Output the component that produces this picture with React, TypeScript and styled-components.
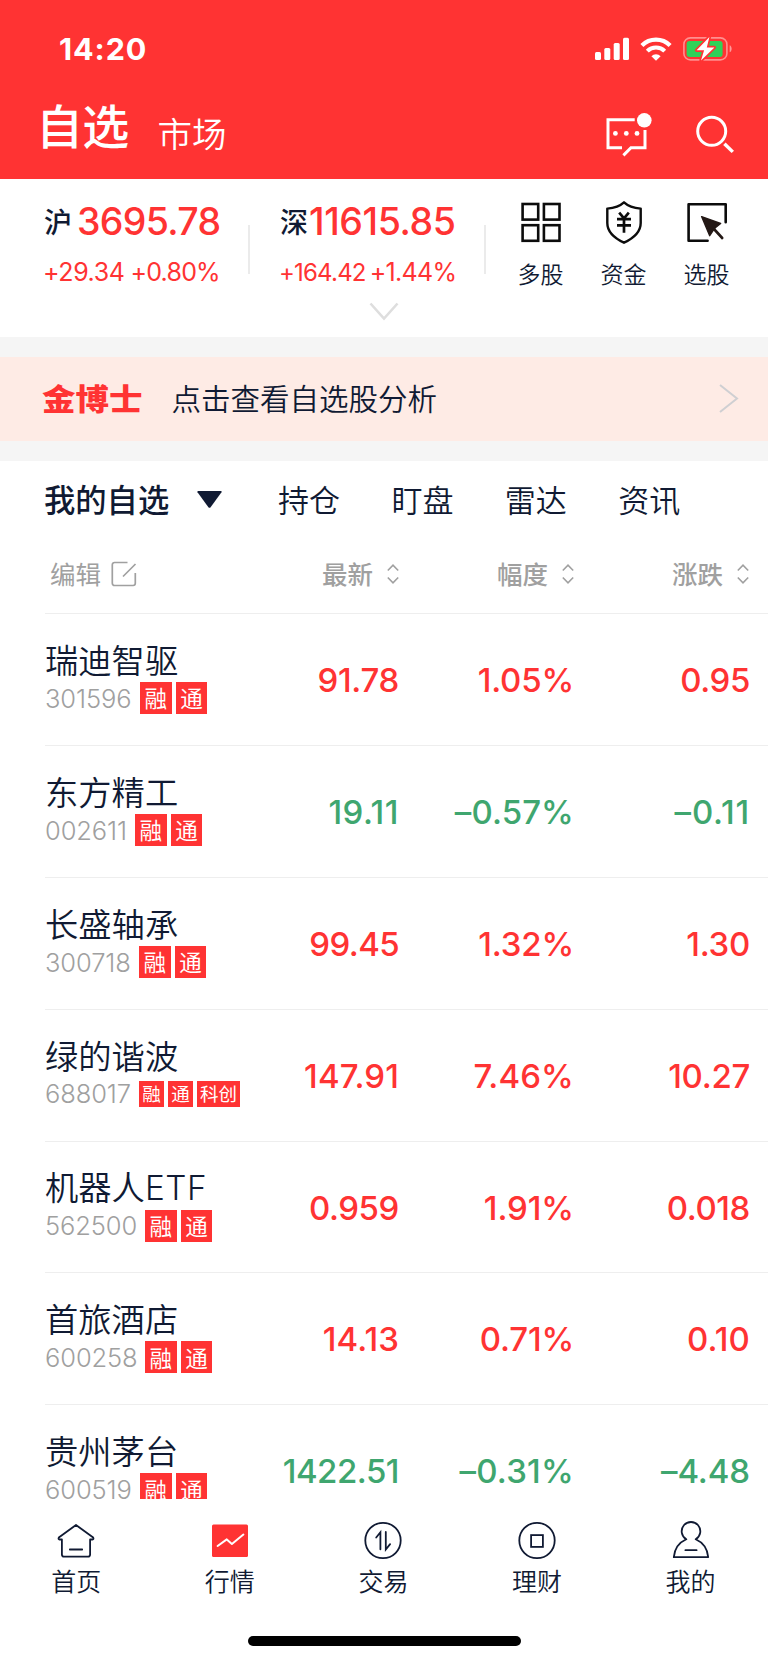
import React from "react";
import styled, { createGlobalStyle } from "styled-components";

const RED = "#ff3333";
const GREEN = "#3fa66f";
const INK = "#101a33";
const GREY = "#a0a0a0";
const CJK = '"Noto Sans CJK SC", "Noto Sans", sans-serif';
const NUM = 'Inter, "Noto Sans CJK SC", sans-serif';

const GlobalStyle = createGlobalStyle`
  * { box-sizing: border-box; }
  html, body { margin: 0; padding: 0; background: #fff; }
  body { font-family: ${CJK}; color: ${INK}; }
  svg { display: block; flex: none; overflow: visible; }
`;

const Screen = styled.div`
  width: 768px;
  height: 1663px;
  display: flex;
  flex-direction: column;
  overflow: hidden;
  background: #fff;
`;

type TextProps = { $size: number; $weight?: number; $color?: string; $spacing?: number };

const BaseText = styled.span<TextProps>`
  font-size: ${(p) => p.$size}px;
  line-height: 1;
  font-weight: ${(p) => p.$weight ?? 400};
  color: ${(p) => p.$color ?? "inherit"};
  letter-spacing: ${(p) => p.$spacing ?? 0}px;
  white-space: nowrap;
`;

const Han = styled(BaseText)`
  font-family: ${CJK};
  margin-bottom: 3px;
`;

const Num = styled(BaseText)`
  font-family: ${NUM};
`;

const Latin = styled.span`
  font-family: ${NUM};
  line-height: 0;
  letter-spacing: 0.6px;
`;

/* Header */
const Header = styled.header`
  height: 179px;
  flex: none;
  background: ${RED};
  color: #fff;
`;

const StatusBar = styled.div`
  height: 98px;
  padding: 0 36px 0 59px;
  display: flex;
  align-items: center;
  justify-content: space-between;
`;

const StatusIcons = styled.div`
  display: flex;
  align-items: center;
  gap: 11px;
`;

const TitleBar = styled.div`
  height: 81px;
  display: flex;
  align-items: flex-start;
  padding: 2px 33px 0 36px;
`;

const SubTitle = styled.div`
  margin: 15px auto 0 29px;
  display: flex;
`;

const HeaderIcons = styled.div`
  display: flex;
  gap: 36px;
  padding-top: 10px;
`;

/* Indices */
const Indices = styled.section`
  height: 158px;
  flex: none;
  display: flex;
  flex-direction: column;
  align-items: center;
`;

const IndexRow = styled.div`
  width: 100%;
  height: 120px;
  display: flex;
  padding: 22px 0 0 43px;
`;

const IndexCard = styled.div<{ $width: number; $ruleGap: number }>`
  width: ${(p) => p.$width}px;
  display: flex;
  justify-content: space-between;
  margin-right: ${(p) => p.$ruleGap}px;
`;

const IndexBody = styled.div`
  display: flex;
  flex-direction: column;
  gap: 13px;
`;

const IndexLine = styled.div<{ $height: number; $gap: number; $indent?: number }>`
  height: ${(p) => p.$height}px;
  padding-left: ${(p) => p.$indent ?? 0}px;
  display: flex;
  align-items: center;
  gap: ${(p) => p.$gap}px;
`;

const Rule = styled.i`
  width: 1.5px;
  height: 49px;
  margin-top: 24px;
  background: #ebebeb;
`;

const Shortcuts = styled.nav`
  display: flex;
  gap: 37px;
`;

const Shortcut = styled.div`
  width: 46px;
  display: flex;
  flex-direction: column;
  align-items: center;
  gap: 18px;
`;

const Gap = styled.div<{ $height: number }>`
  height: ${(p) => p.$height}px;
  flex: none;
  background: #f5f5f5;
`;

const Banner = styled.section`
  height: 84px;
  flex: none;
  display: flex;
  align-items: center;
  padding: 0 29px 0 42px;
  background: #feebe5;
`;

const BrandMark = styled(Han)`
  transform: scaleY(0.88);
`;

const BannerText = styled.div`
  margin: 0 auto 0 29px;
  display: flex;
`;

/* Watchlist */
const Tabs = styled.nav`
  height: 79px;
  flex: none;
  display: flex;
  align-items: center;
  padding-left: 44px;
  padding-bottom: 1px;
`;

const ActiveTab = styled.div`
  width: 234px;
  display: flex;
  align-items: center;
  gap: 28px;
`;

const Tab = styled.div`
  width: 113.4px;
  display: flex;
`;

const HeadRow = styled.div`
  height: 73px;
  flex: none;
  margin-left: 45px;
  padding: 0 19px 5px 5px;
  display: grid;
  grid-template-columns: 349px 175px 175px;
  align-items: center;
`;

const EditCell = styled.div`
  display: flex;
  align-items: center;
  gap: 9.5px;
`;

const HeadCells = styled.div`
  display: flex;
  align-items: center;
  justify-content: space-between;
`;

const SortCell = styled.div`
  display: flex;
  align-items: center;
  justify-content: flex-end;
  gap: 14px;
`;

const List = styled.main`
  height: 886px;
  flex: none;
  overflow: hidden;
`;

const Row = styled.div`
  height: 131.9px;
  margin-left: 45px;
  padding-right: 18px;
  border-top: 1.5px solid #eeeeee;
  display: grid;
  grid-template-columns: 1fr 175px 176px;
  align-items: center;
`;

const RowLead = styled.div`
  display: flex;
  align-items: center;
  justify-content: space-between;
  align-self: stretch;
`;

const Stock = styled.div`
  height: 100%;
  padding-top: 29px;
`;

const StockName = styled.div`
  height: 34px;
  display: flex;
  align-items: center;
`;

const StockMeta = styled.div`
  height: 32px;
  margin-top: 5px;
  display: flex;
  align-items: center;
  gap: 4px;
`;

const Code = styled(Num)<{ $width: number }>`
  width: ${(p) => p.$width}px;
  padding-top: 1px;
`;

const Tag = styled.span<{ $small?: boolean; $wide?: boolean }>`
  width: ${(p) => (p.$wide ? 43 : p.$small ? 25 : 31.7)}px;
  height: ${(p) => (p.$small ? 26 : 32)}px;
  padding-bottom: 1px;
  display: flex;
  align-items: center;
  justify-content: center;
  background: ${RED};
  color: #fff;
  font-size: ${(p) => (p.$small ? 18.5 : 22.5)}px;
  line-height: 1;
`;

const Value = styled.div`
  display: flex;
  justify-content: flex-end;
  padding-top: 2px;
`;

/* Bottom navigation */
const BottomNav = styled.nav`
  height: 137px;
  flex: none;
  display: grid;
  grid-template-columns: repeat(5, 153.6px);
  margin-left: -0.6px;
  padding-top: 22px;
`;

const NavItem = styled.div`
  display: flex;
  flex-direction: column;
  align-items: center;
  gap: 7px;
`;

const HomeIndicator = styled.div`
  width: 273px;
  height: 10px;
  margin: 0 auto;
  border-radius: 5px;
  background: #000;
`;

const Signal = () => (
  <svg width="34" height="24" fill="#fff">
    <rect x="0" y="15" width="6" height="8" rx="1.5" />
    <rect x="9.3" y="11" width="6" height="12" rx="1.5" />
    <rect x="18.7" y="6" width="6" height="17" rx="1.5" />
    <rect x="28" y="0.7" width="6" height="22.3" rx="1.5" />
  </svg>
);

const Wifi = () => (
  <svg width="32" height="24" viewBox="0 0 32 24" fill="none" stroke="#fff">
    <path d="M1.9 8.4a20 20 0 0 1 28.2 0" strokeWidth="4.3" />
    <path d="M7.3 14.1a12.3 12.3 0 0 1 17.4 0" strokeWidth="4.1" />
    <path d="M11.4 19.2a6.5 6.5 0 0 1 9.2 0L16 23.7Z" fill="#fff" stroke="none" />
  </svg>
);

const Battery = () => (
  <svg width="49" height="24" viewBox="0 0 49 24">
    <rect x="0.9" y="0.9" width="43" height="22" rx="6.5" fill="none" stroke="#fff" strokeOpacity="0.45" strokeWidth="1.6" />
    <path d="M46.7 8.3c2.6 1 2.6 6 0 7z" fill="#fff" fillOpacity="0.5" />
    <rect x="3.6" y="4" width="36" height="16" rx="3" fill="#30d158" />
    <path
      d="M26.4 0 13.6 13.2h7.5L18 23.6 31.4 10.4h-7.6Z"
      fill="#fff"
      stroke={RED}
      strokeWidth="3.4"
      strokeLinejoin="round"
      paintOrder="stroke"
    />
  </svg>
);

const Chat = () => (
  <svg width="50" height="50" viewBox="0 0 50 50" fill="none" stroke="#fff" strokeWidth="3">
    <path d="M30.7 9.7H4v28h14M41 20v17.7H27l-7.6 7.7" />
    <g fill="#fff" stroke="none">
      <circle cx="40.3" cy="10.3" r="7.3" />
      <circle cx="11.4" cy="23.4" r="2.4" />
      <circle cx="22.3" cy="23.4" r="2.4" />
      <circle cx="33" cy="23.4" r="2.4" />
    </g>
  </svg>
);

const Search = () => (
  <svg width="45" height="45" viewBox="0 0 45 45" fill="none" stroke="#fff" strokeWidth="3">
    <circle cx="21.7" cy="21.3" r="14" />
    <path d="m34.4 33.7 8.4 8.2" strokeWidth="3.4" />
  </svg>
);

const GridIcon = () => (
  <svg width="40" height="43" viewBox="0 0 40 43" fill="none" stroke="#0c0c0c" strokeWidth="2.6">
    <rect x="1.6" y="3" width="15.6" height="15.6" />
    <rect x="22.9" y="3" width="15.6" height="15.6" />
    <rect x="1.6" y="24.2" width="15.6" height="15.6" />
    <rect x="22.9" y="24.2" width="15.6" height="15.6" />
  </svg>
);

const ShieldIcon = () => (
  <svg width="36" height="43" viewBox="0 0 36 43" fill="none" stroke="#0c0c0c" strokeWidth="2.4" strokeLinejoin="round">
    <path d="M18 1.3C14 5 8 7 1.3 7.6V22C1.3 30.5 8 37 18 41.7 28 37 34.7 30.5 34.7 22V7.6C28 7 22 5 18 1.3Z" />
    <path d="m13.2 11.7 4.8 5.6 4.8-5.6M11 18.2h14M11 24.3h14M18 17.3v14.4" strokeWidth="2.7" />
  </svg>
);

const PickIcon = () => (
  <svg width="40" height="43" viewBox="0 0 40 43" fill="none" stroke="#0c0c0c" strokeWidth="2.6" strokeLinecap="round" strokeLinejoin="round">
    <path d="M38.7 21.3V3.2H1.6v36.6h19" />
    <path d="m14.6 15.6 19 6.9-5.3 4.2-1.6 1.8-4 6.2Z" fill="#231815" stroke="#231815" strokeWidth="1.4" />
    <path d="m27 28 8.2 9" stroke="#231815" strokeWidth="2.6" />
  </svg>
);

const EditIcon = () => (
  <svg width="26" height="26" viewBox="0 0 26 26" fill="none" stroke={GREY} strokeWidth="1.7">
    <path d="M16.5 1.5H3.5a2.2 2.2 0 0 0-2.200 2.200v18.600a2.200 2.200 0 0 0 2.200 2.200h18.600a2.200 2.200 0 0 0 2.200-2.200V12M12 15.500 24.500 3" />
  </svg>
);

const SortIcon = () => (
  <svg width="12" height="20" viewBox="0 0 12 20" fill="none" stroke={GREY} strokeWidth="1.6">
    <path d="m.8 6.500 5.200-5.300 5.200 5.300M.8 13.500 6 18.800l5.200-5.300" />
  </svg>
);

const IconFrame = ({ children }: { children: React.ReactNode }) => (
  <svg width="38" height="40" viewBox="0 0 38 40" fill="none" stroke={INK} strokeWidth="1.8" strokeLinecap="round" strokeLinejoin="round">
    {children}
  </svg>
);

const HomeIcon = () => (
  <IconFrame>
    <path d="M19 4 1.800 16.600q-.8 1.600.8 1.900h2.300V33.500a2.200 2.200 0 0 0 2.200 2.200h23.800a2.200 2.200 0 0 0 2.200-2.200V18.500h2.300q1.600-.3.800-1.900ZM12.800 28.500h12.400" />
  </IconFrame>
);

const MarketIcon = () => (
  <IconFrame>
    <rect x="1" y="3.500" width="36" height="32.600" rx="1.500" fill={RED} stroke="none" />
    <path d="m6.600 25 9.200-6.600 5.100 4.600 11.500-9.400" stroke="#fff" strokeWidth="2" />
  </IconFrame>
);

const TradeIcon = () => (
  <IconFrame>
    <circle cx="19" cy="19.500" r="17.700" />
    <path d="m12.200 16.500 4.200-5.200v17M21.800 11v17.500l4.300-5.400" strokeLinejoin="miter" />
  </IconFrame>
);

const WealthIcon = () => (
  <IconFrame>
    <circle cx="19" cy="19.500" r="17.700" />
    <rect x="13.100" y="14.100" width="11.800" height="11.800" strokeLinejoin="miter" />
  </IconFrame>
);

const ProfileIcon = () => (
  <IconFrame>
    <path d="M14.300 18.300a9.300 9.300 0 1 1 9.400 0Q35 23.300 36.200 36.200H1.800Q3 23.300 14.300 18.300ZM13.400 29.200h11.200" />
  </IconFrame>
);

type Figure = [text: string, spacing: number];
type StockItem = { name: string; latin?: string; code: string; codeW: number; tags: string[]; v: Figure[]; down?: boolean };

const stocks: StockItem[] = [
  { name: "瑞迪智驱", code: "301596", codeW: 91, tags: ["融", "通"], v: [["91.78", -0.3], ["1.05%", -0.2], ["0.95", -0.4]] },
  { name: "东方精工", code: "002611", codeW: 86, tags: ["融", "通"], v: [["19.11", 0.5], ["–0.57%", 0.1], ["–0.11", 0.8]], down: true },
  { name: "长盛轴承", code: "300718", codeW: 90, tags: ["融", "通"], v: [["99.45", -0.6], ["1.32%", -0.2], ["1.30", -0.3]] },
  { name: "绿的谐波", code: "688017", codeW: 90, tags: ["融", "通", "科创"], v: [["147.91", 0.1], ["7.46%", 0.1], ["10.27", -0.3]] },
  { name: "机器人", latin: "ETF", code: "562500", codeW: 96, tags: ["融", "通"], v: [["0.959", -0.4], ["1.91%", -0.1], ["0.018", -0.4]] },
  { name: "首旅酒店", code: "600258", codeW: 96, tags: ["融", "通"], v: [["14.13", 0.1], ["0.71%", -0.2], ["0.10", 0.1]] },
  { name: "贵州茅台", code: "600519", codeW: 91, tags: ["融", "通"], v: [["1422.51", -0.5], ["–0.31%", 0.2], ["–4.48", -0.1]], down: true },
];

const navItems = [
  { label: "首页", Icon: HomeIcon },
  { label: "行情", Icon: MarketIcon },
  { label: "交易", Icon: TradeIcon },
  { label: "理财", Icon: WealthIcon },
  { label: "我的", Icon: ProfileIcon },
];

const shortcuts = [
  { label: "多股", Icon: GridIcon },
  { label: "资金", Icon: ShieldIcon },
  { label: "选股", Icon: PickIcon },
];

const Sortable = ({ label }: { label: string }) => (
  <SortCell>
    <Han $size={25.5} $weight={500} $color={GREY}>{label}</Han>
    <SortIcon />
  </SortCell>
);

const Price = ({ figure: [text, spacing], down }: { figure: Figure; down?: boolean }) => (
  <Value>
    <Num $size={33} $weight={450} $color={down ? GREEN : RED} $spacing={spacing}>{text}</Num>
  </Value>
);

export default function App() {
  return (
    <Screen>
      <GlobalStyle />
      <Header>
        <StatusBar>
          <Num $size={30.5} $weight={750} $spacing={0.9}>14:20</Num>
          <StatusIcons>
            <Signal />
            <Wifi />
            <Battery />
          </StatusIcons>
        </StatusBar>
        <TitleBar>
          <Han $size={47} $weight={500} $spacing={-0.8}>自选</Han>
          <SubTitle><Han $size={34.5} $weight={350}>市场</Han></SubTitle>
          <HeaderIcons>
            <Chat />
            <Search />
          </HeaderIcons>
        </TitleBar>
      </Header>

      <Indices>
        <IndexRow>
          <IndexCard $width={206.5} $ruleGap={29.5}>
            <IndexBody>
              <IndexLine $height={42} $gap={5} $indent={1}>
                <Han $size={28} $weight={500}>沪</Han>
                <Num $size={37.5} $weight={450} $color={RED} $spacing={-0.7}>3695.78</Num>
              </IndexLine>
              <IndexLine $height={33} $gap={6}>
                <Num $size={25} $color={RED} $spacing={-0.4}>+29.34</Num>
                <Num $size={25} $color={RED} $spacing={-0.8}>+0.80%</Num>
              </IndexLine>
            </IndexBody>
            <Rule />
          </IndexCard>
          <IndexCard $width={206.5} $ruleGap={32}>
            <IndexBody>
              <IndexLine $height={42} $gap={1} $indent={1}>
                <Han $size={28} $weight={500}>深</Han>
                <Num $size={37.5} $weight={450} $color={RED} $spacing={-0.4}>11615.85</Num>
              </IndexLine>
              <IndexLine $height={33} $gap={4}>
                <Num $size={24} $color={RED} $spacing={-0.8}>+164.42</Num>
                <Num $size={25} $color={RED} $spacing={-0.7}>+1.44%</Num>
              </IndexLine>
            </IndexBody>
            <Rule />
          </IndexCard>
          <Shortcuts>
            {shortcuts.map(({ label, Icon }) => (
              <Shortcut key={label}>
                <Icon />
                <Han $size={23} $weight={350}>{label}</Han>
              </Shortcut>
            ))}
          </Shortcuts>
        </IndexRow>
        <svg width="30" height="24" viewBox="0 0 30 24" fill="none" stroke="#dedede" strokeWidth="2.6">
          <path d="m1.500 4.500 13.500 15 13.500-15" />
        </svg>
      </Indices>

      <Gap $height={20} />
      <Banner>
        <BrandMark $size={33.500} $weight={900} $color={RED}>金博士</BrandMark>
        <BannerText><Han $size={29.500} $weight={350}>点击查看自选股分析</Han></BannerText>
        <svg width="20" height="30" viewBox="0 0 20 30" fill="none" stroke="#cfcfd2" strokeWidth="2">
          <path d="m1 1 17 13.500L1 28" />
        </svg>
      </Banner>
      <Gap $height={20} />

      <Tabs>
        <ActiveTab>
          <Han $size={31.300} $weight={500}>我的自选</Han>
          <svg width="25" height="17" fill={INK}>
            <path d="M1 0h23q1.200.3.500 1.300L13.600 16.200q-1 1.200-2.200 0L.5 1.300Q0 .3 1 0Z" />
          </svg>
        </ActiveTab>
        {["持仓", "盯盘", "雷达", "资讯"].map((t) => (
          <Tab key={t}><Han $size={31} $weight={350}>{t}</Han></Tab>
        ))}
      </Tabs>
      <HeadRow>
        <HeadCells>
          <EditCell>
            <Han $size={25.500} $color={GREY}>编辑</Han>
            <EditIcon />
          </EditCell>
          <Sortable label="最新" />
        </HeadCells>
        <Sortable label="幅度" />
        <Sortable label="涨跌" />
      </HeadRow>

      <List>
        {stocks.map((s) => (
          <Row key={s.code}>
            <RowLead>
              <Stock>
                <StockName>
                  <Han $size={33.300} $weight={350}>
                    {s.name}
                    {s.latin && <Latin>{s.latin}</Latin>}
                  </Han>
                </StockName>
                <StockMeta>
                  <Code $size={25.500} $weight={350} $color={GREY} $width={s.codeW} $spacing={-0.1}>{s.code}</Code>
                  {s.tags.map((t) => (
                    <Tag key={t} $small={s.tags.length > 2} $wide={t.length > 1}>{t}</Tag>
                  ))}
                </StockMeta>
              </Stock>
              <Price figure={s.v[0]} down={s.down} />
            </RowLead>
            <Price figure={s.v[1]} down={s.down} />
            <Price figure={s.v[2]} down={s.down} />
          </Row>
        ))}
      </List>

      <BottomNav>
        {navItems.map(({ label, Icon }) => (
          <NavItem key={label}>
            <Icon />
            <Han $size={25} $weight={350}>{label}</Han>
          </NavItem>
        ))}
      </BottomNav>
      <HomeIndicator />
    </Screen>
  );
}
